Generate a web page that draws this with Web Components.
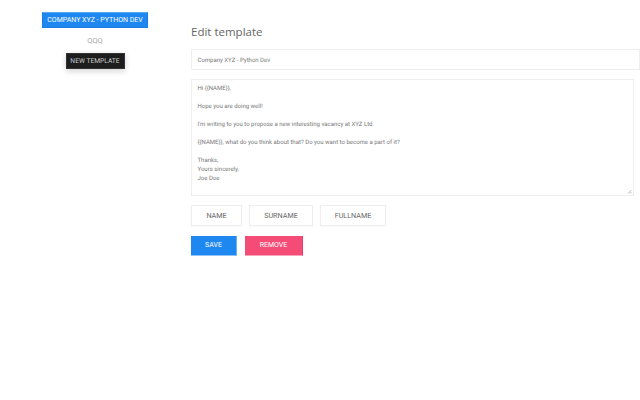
<!DOCTYPE html>
<html><head><meta charset="utf-8"><style>
html,body{margin:0;padding:0;background:#fff;height:100%}
body{font-family:Roboto,"Open Sans",sans-serif}
</style></head><body>
<template id="t-app"><style>
:host{display:grid;grid-template-columns:191px 1fr;width:640px;height:400px;overflow:hidden;color:#555}
.side{display:flex;flex-direction:column;align-items:center;padding-top:12px;padding-right:1px}
.main{display:flex;flex-direction:column;padding-top:23px}
h1{font:400 11.5px/18px "Open Sans",sans-serif;color:#666;margin:0 0 8px}
</style><div class="side"><slot name="side"></slot></div><div class="main"><h1>Edit template</h1><slot></slot></div></template>

<template id="t-btn"><style>
:host{display:inline-flex;align-items:center;justify-content:center;box-sizing:border-box;font:400 7px/1 Roboto,sans-serif;text-transform:uppercase;white-space:nowrap;text-rendering:geometricPrecision}
:host([kind=blue]){background:#1e88f0;color:#fff;border:1px solid #1a7fe0;border-top-color:#5aa8f0;height:16px;width:106px}
:host([kind=dark]){background:#1d1d1d;color:#ccc;height:16px;width:59px;margin-top:7px;box-shadow:0 2px 6px rgba(0,0,0,.18);border:1px solid #333;font-size:6.7px}
:host([kind=tag]){background:#fff;color:#666;border:1px solid #eee;height:21px;font-size:7.2px;box-shadow:0 1px 2px rgba(0,0,0,.03)}
:host([kind=save]){background:#1e88f0;color:#fff;height:20px;width:46px;border-bottom:1px solid #8fc4f5;border-right:1px solid #6ab0f2}
:host([kind=remove]){background:#f44c76;color:#fff;height:20px;width:58px;border-bottom:1px solid #f8a5ba;border-right:1px solid #ee3a68}
</style><slot></slot></template>

<template id="t-field"><style>
:host{display:block;box-sizing:border-box;border:1px solid #eee;background:#fff;color:#777;font:400 6px/9px Roboto,sans-serif;white-space:pre-line;text-rendering:geometricPrecision}
:host([kind=line]){height:21px;width:449px;padding:5.5px;margin-bottom:9px}
:host([kind=area]){height:117px;width:443px;padding:4px 5.5px;position:relative;margin-bottom:9px}
svg{position:absolute;right:1px;bottom:1px}
</style><slot></slot><svg id="g" width="5" height="5" viewBox="0 0 5 5"><path d="M4.5 1L1 4.5M4.5 3L3 4.5" stroke="#aaa" stroke-width=".8"/></svg></template>

<template id="t-row"><style>
:host{display:flex;gap:var(--gap,8px);margin-bottom:var(--mb,10px)}
</style><slot></slot></template>

<template id="t-link"><style>
:host{display:block;font:400 7.5px/10px Roboto,sans-serif;color:#aaa;margin-top:8px}
</style><slot></slot></template>

<x-app>
  <x-btn slot="side" kind="blue">Company XYZ - Python Dev</x-btn>
  <x-link slot="side">QQQ</x-link>
  <x-btn slot="side" kind="dark">New template</x-btn>
  <x-field kind="line">Company XYZ - Python Dev</x-field>
  <x-field kind="area">Hi {{NAME}},

Hope you are doing well!

I'm writing to you to propose a new interesting vacancy at XYZ Ltd.

{{NAME}}, what do you think about that? Do you want to become a part of it?

Thanks,
Yours sincerely,
Joe Doe</x-field>
  <x-row style="--gap:7px">
    <x-btn kind="tag" style="width:51px">Name</x-btn>
    <x-btn kind="tag" style="width:64px">Surname</x-btn>
    <x-btn kind="tag" style="width:66px">Fullname</x-btn>
  </x-row>
  <x-row>
    <x-btn kind="save">Save</x-btn>
    <x-btn kind="remove">Remove</x-btn>
  </x-row>
</x-app>
<script>
function def(name,id,after){customElements.define(name,class extends HTMLElement{constructor(){super();const r=this.attachShadow({mode:'open'});r.appendChild(document.getElementById(id).content.cloneNode(true));if(after)after(this,r);}});}
def('x-app','t-app');def('x-btn','t-btn');def('x-row','t-row');def('x-link','t-link');
def('x-field','t-field',(h,r)=>{if(h.getAttribute('kind')!=='area')r.getElementById('g').remove();});
</script>
</body></html>
